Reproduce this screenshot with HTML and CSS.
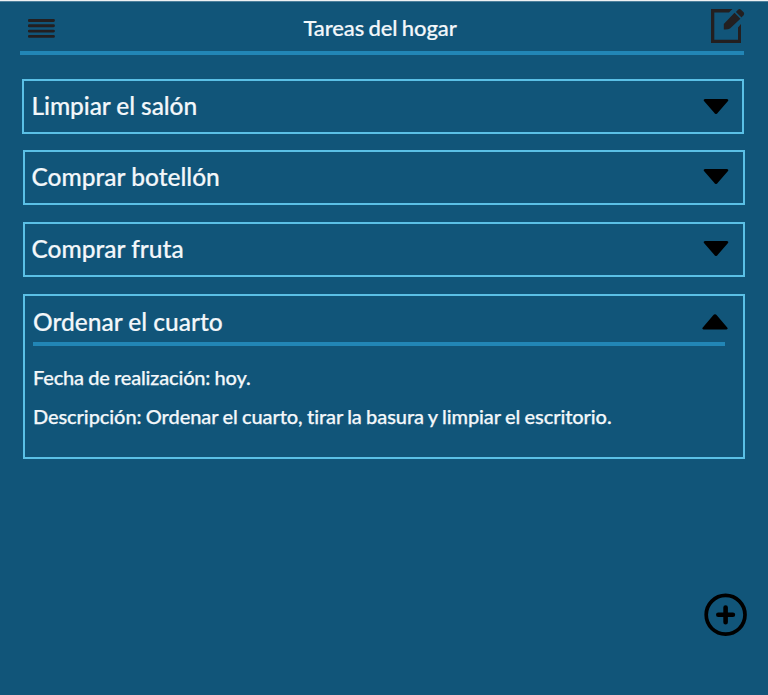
FILE: index.html
```html
<!DOCTYPE html>
<html lang="es">
<head>
<meta charset="utf-8">
<title>Tareas del hogar</title>
<link rel="stylesheet" href="styles.css">
</head>
<body>
<header class="topbar">
  <svg class="menu" width="27" height="20" viewBox="0 0 27 20"><path d="M1.200 1.500H25.500M1.200 6.800H25.500M1.200 12.100H25.500M1.200 17.400H25.500" stroke="#231f20" stroke-width="2.900" stroke-linecap="round"/></svg>
  <h1 class="title">Tareas del hogar</h1>
  <svg class="edit" width="34" height="35" viewBox="0 0 34 35"><path d="M21.500 0H0V34H30V15L27 18.500V30.700H3.300V3.500H18Z" fill="#231f20"/><path d="M12.800 20.500V15L23.500 3.800L29.400 9.700L19 19.500Q17 20.800 12.800 20.500Z" fill="#231f20"/><path d="M24.900 2.900L27 .7Q28.500-.6 30 .8L32.400 3.100Q33.800 4.700 32.500 6.300L30.500 8.500Z" fill="#231f20"/></svg>
</header>
<main class="tasks">
  <section class="card first"><div class="row"><h2 class="name">Limpiar el salón</h2><svg class="arrow" width="26" height="16" viewBox="0 0 26 16"><path d="M2 0H24Q26 .4 25 2L15 13.500Q13 16.500 11 13.500L1 2Q0 .4 2 0Z"/></svg></div></section>
  <section class="card second"><div class="row"><h2 class="name">Comprar botellón</h2><svg class="arrow" width="26" height="16" viewBox="0 0 26 16"><path d="M2 0H24Q26 .4 25 2L15 13.500Q13 16.500 11 13.500L1 2Q0 .4 2 0Z"/></svg></div></section>
  <section class="card third"><div class="row"><h2 class="name">Comprar fruta</h2><svg class="arrow" width="26" height="16" viewBox="0 0 26 16"><path d="M2 0H24Q26 .4 25 2L15 13.500Q13 16.500 11 13.500L1 2Q0 .4 2 0Z"/></svg></div></section>
  <section class="card open">
    <div class="row"><h2 class="name">Ordenar el cuarto</h2><svg class="arrow" width="26" height="16" viewBox="0 0 26 16"><path d="M1.500 15.500H24.500Q26.400 15.200 25.200 13.500L15 1.500Q13-1 11 1.500L.8 13.500Q-.4 15.200 1.500 15.500Z"/></svg></div>
    <div class="rule"></div>
    <p class="text date">Fecha de realización: hoy.</p>
    <p class="text desc">Descripción: Ordenar el cuarto, tirar la basura y limpiar el escritorio.</p>
  </section>
</main>
<svg class="add" width="44" height="44" viewBox="0 0 44 44" fill="none" stroke="#000"><circle cx="21.600" cy="21.800" r="19.400" stroke-width="3.700"/><path d="M21.600 14.500V29.200M14.300 21.800H28.900" stroke-width="4.600" stroke-linecap="round"/></svg>
</body>
</html>
```
FILE: styles.css
```css
* { box-sizing: border-box; }
body {
  margin: 0;
  width: 768px;
  height: 695px;
  overflow: hidden;
  background: #115579;
  color: #f3f7fa;
  font-family: Lato, sans-serif;
  font-variant-ligatures: none;
  border-top: 1px solid #eef1f3;
  box-shadow: inset 0 1px #4f809c;
}
h1, h2, p { margin: 0; white-space: nowrap; }
.topbar {
  display: grid;
  grid-template-columns: 1fr auto 1fr;
  align-items: start;
  height: 54px;
  margin: 0 24px 0 20px;
  border-bottom: 4px solid #2286b6;
}
.menu { margin: 18px 0 0 8px; }
.title {
  margin: 13px 0 0 -4px;
  font-size: 22px;
  line-height: 28px;
  font-weight: 500;
  letter-spacing: -.12px;
  word-spacing: -1px;
  -webkit-text-stroke: .2px;
}
.edit { justify-self: end; margin: 8px -1px 0 0; }
.tasks { padding: 24px 23px 0; }
.card {
  width: 722px;
  height: 55px;
  border: 2px solid #5bc0e6;
}
.first { margin-left: -1px; }
.second { margin-top: 16px; }
.third { margin-top: 17px; }
.open { height: 165px; margin-top: 17px; padding: 0 18px 0 8px; }
.row {
  display: flex;
  justify-content: space-between;
  align-items: flex-start;
  padding: 10px 14px 0 6.5px;
}
.first .row { padding: 10px 13px 0 7.5px; }
.open .row { height: 46px; padding: 11px 0 0; margin-right: -3px; }
.name {
  font-size: 24.5px;
  line-height: 30px;
  font-weight: 500;
  -webkit-text-stroke: .2px;
}
.first .name { letter-spacing: -.08px; }
.arrow { margin-top: 8px; }
.second .arrow, .third .arrow, .open .arrow { margin-top: 7px; }
.rule { height: 4px; background: #2286b6; }
.text {
  font-size: 20px;
  line-height: 24px;
  font-weight: 500;
  word-spacing: -.6px;
  -webkit-text-stroke: .25px;
}
.date { margin-top: 19px; letter-spacing: -.17px; }
.desc { margin-top: 15px; letter-spacing: -.08px; }
.add { position: absolute; left: 704px; top: 593px; }
```
